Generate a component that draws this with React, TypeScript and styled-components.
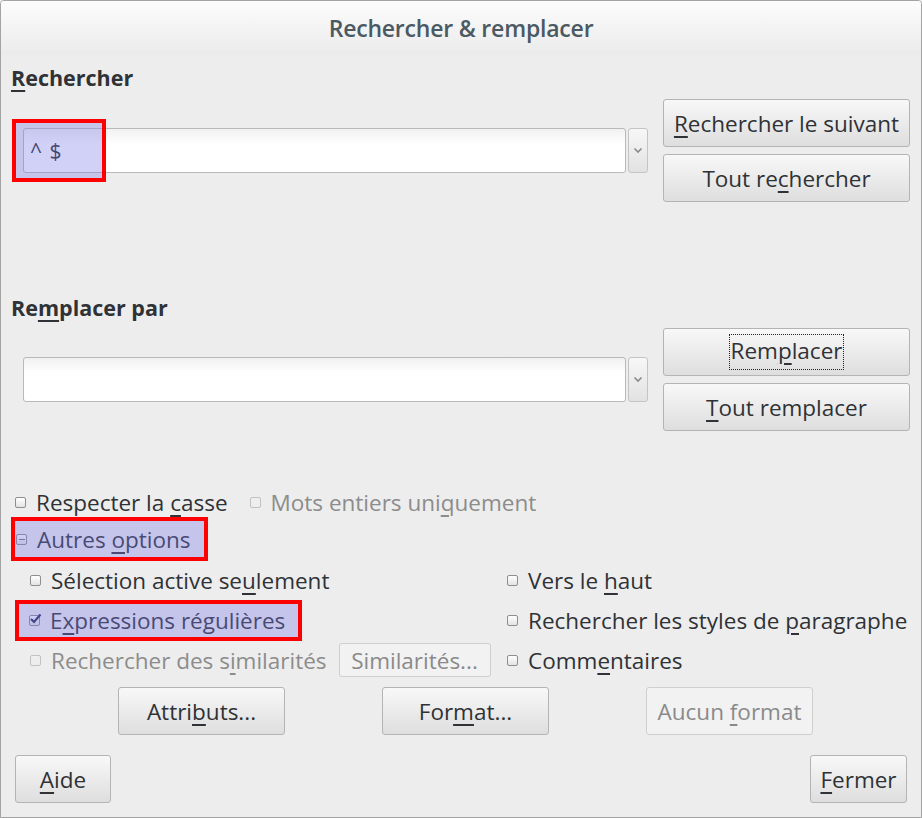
import styled, { createGlobalStyle } from "styled-components";

const Global = createGlobalStyle`
    html, body {
        margin: 0;
        padding: 0;
        background: #ededed;
    }
    body {
        font-family: "Open Sans", "DejaVu Sans", sans-serif;
        color: #333538;
    }
`;

const Window = styled.div`
    width: 922px;
    height: 818px;
    box-sizing: border-box;
    border: 1px solid #a3a3a3;
    border-top-left-radius: 4px;
    border-top-right-radius: 4px;
    background: #ededed;
    display: flex;
    flex-direction: column;
    overflow: hidden;
`;

const TitleBar = styled.div`
    height: 54px;
    flex: none;
    display: flex;
    align-items: center;
    justify-content: center;
    background: linear-gradient(#fcfcfc, #ebebeb);
    font-size: 23px;
    font-weight: 600;
    color: #4b5962;
    letter-spacing: -0.2px;
`;

const Body = styled.div`
    display: flex;
    flex-direction: column;
    padding: 0 10px 0 10px;
    font-size: 22.5px;
`;

const SectionLabel = styled.div<{ top: number }>`
    margin-top: ${(p) => p.top}px;
    height: 24px;
    line-height: 24px;
    font-size: 21.5px;
    font-weight: 700;
    color: #2f3236;
`;

const Mn = styled.span`
    text-decoration: underline;
    text-decoration-thickness: 2px;
    text-underline-offset: 4px;
`;

const FieldRow = styled.div<{ top: number }>`
    margin-top: ${(p) => p.top}px;
    height: 103px;
    display: flex;
    align-items: center;
`;

const ComboWrap = styled.div`
    position: relative;
    margin-left: 12px;
    display: flex;
    gap: 2px;
`;

const Entry = styled.div`
    width: 603px;
    height: 45px;
    box-sizing: border-box;
    border: 1px solid #b9b9b9;
    border-radius: 3px;
    background: linear-gradient(#f1f1f1, #ffffff 35%);
    display: flex;
    align-items: center;
    padding-left: 6px;
    font-size: 21px;
    color: #2a2c30;
    letter-spacing: 1px;
`;

const DropButton = styled.div`
    width: 20px;
    height: 45px;
    box-sizing: border-box;
    border: 1px solid #c4c4c4;
    border-radius: 3px;
    background: linear-gradient(#f7f7f7, #e2e2e2);
    display: flex;
    align-items: center;
    justify-content: center;
`;

const Mark = styled.div<{ w: number; h: number; l: number; t: number }>`
    position: absolute;
    left: ${(p) => p.l}px;
    top: ${(p) => p.t}px;
    width: ${(p) => p.w}px;
    height: ${(p) => p.h}px;
    box-sizing: border-box;
    border: 4px solid #ff0000;
    background: rgba(120, 120, 235, 0.34);
    pointer-events: none;
`;

const ButtonStack = styled.div`
    margin-left: 15px;
    display: flex;
    flex-direction: column;
    gap: 7px;
`;

const Button = styled.div<{ w: number; disabled?: boolean; h?: number }>`
    width: ${(p) => p.w}px;
    height: ${(p) => p.h ?? 48}px;
    box-sizing: border-box;
    border: 1px solid ${(p) => (p.disabled ? "#cfcfcf" : "#b4b4b4")};
    border-radius: 3px;
    background: ${(p) =>
        p.disabled ? "#f2f2f2" : "linear-gradient(#f8f8f8, #dedede)"};
    color: ${(p) => (p.disabled ? "#8a8a8a" : "#2f3236")};
    display: flex;
    align-items: center;
    justify-content: center;
    flex: none;
    white-space: nowrap;
`;

const Focus = styled.span`
    outline: 1px dotted #222;
    padding: 0 1px 2px 1px;
    line-height: 32px;
`;

const OptionRow = styled.div<{ top?: number; h: number }>`
    margin-top: ${(p) => p.top ?? 0}px;
    height: ${(p) => p.h}px;
    display: flex;
    align-items: center;
`;

const Check = styled.span<{ disabled?: boolean }>`
    position: relative;
    width: 11px;
    height: 11px;
    flex: none;
    box-sizing: border-box;
    border: 1px solid ${(p) => (p.disabled ? "#c2c2c2" : "#8e8e8e")};
    border-radius: 2px;
    background: ${(p) =>
        p.disabled ? "#eeeeee" : "linear-gradient(#ffffff, #e3e3e3)"};
`;

const Option = styled.label<{ pad: number; disabled?: boolean }>`
    display: flex;
    align-items: center;
    gap: 10px;
    padding-left: ${(p) => p.pad}px;
    color: ${(p) => (p.disabled ? "#8c8c8c" : "#2f3236")};
    white-space: nowrap;
`;

const Highlight = styled.div<{ w: number; h: number; shift?: number }>`
    position: relative;
    width: ${(p) => p.w}px;
    height: ${(p) => p.h}px;
    margin-left: ${(p) => p.shift ?? 0}px;
    display: flex;
    align-items: center;
    box-sizing: border-box;
`;

const OptionGrid = styled.div`
    display: grid;
    grid-template-columns: 496px 1fr;
    grid-template-rows: 39px 41px 38px;
    align-items: center;
`;

const LeftCell = styled.div`
    display: flex;
    align-items: center;
`;

const FormatRow = styled.div`
    margin-top: 8px;
    display: flex;
    gap: 97px;
    padding-left: 107px;
`;

const Footer = styled.div`
    margin-top: 20px;
    display: flex;
    justify-content: space-between;
    padding: 0 4px 0 4px;
`;

function Chevron() {
    return (
        <svg width="10" height="7" viewBox="0 0 10 7">
            <path d="M1.5 1.5 L5 5 L8.5 1.5" fill="none" stroke="#8a8a8a" strokeWidth="1.6" />
        </svg>
    );
}

function Tick() {
    return (
        <svg
            width="13"
            height="12"
            viewBox="0 0 13 12"
            style={{ position: "absolute", left: -1, top: -3 }}
        >
            <path d="M2 6 L5 9 L11.5 1.5" fill="none" stroke="#2a2a55" strokeWidth="2.2" />
        </svg>
    );
}

function Minus() {
    return (
        <svg width="10" height="2" viewBox="0 0 10 2" style={{ position: "absolute", left: 1, top: 4 }}>
            <rect x="1" y="0" width="6" height="1" fill="#777" />
        </svg>
    );
}

export default function App() {
    return (
        <>
            <Global />
            <Window>
                <TitleBar>Rechercher &amp; remplacer</TitleBar>
                <Body>
                    <SectionLabel top={11}>
                        <Mn>R</Mn>echercher
                    </SectionLabel>
                    <FieldRow top={9}>
                        <ComboWrap>
                            <Entry>^ $</Entry>
                            <DropButton>
                                <Chevron />
                            </DropButton>
                            <Mark l={-11} t={-9} w={94} h={63} />
                        </ComboWrap>
                        <ButtonStack>
                            <Button w={247}>
                                <span>
                                    <Mn>R</Mn>echercher le suivant
                                </span>
                            </Button>
                            <Button w={247}>
                                <span>
                                    Tout re<Mn>c</Mn>hercher
                                </span>
                            </Button>
                        </ButtonStack>
                    </FieldRow>

                    <SectionLabel top={94}>
                        Re<Mn>m</Mn>placer par
                    </SectionLabel>
                    <FieldRow top={8}>
                        <ComboWrap>
                            <Entry />
                            <DropButton>
                                <Chevron />
                            </DropButton>
                        </ComboWrap>
                        <ButtonStack>
                            <Button w={247}>
                                <Focus>
                                    Rem<Mn>p</Mn>lacer
                                </Focus>
                            </Button>
                            <Button w={247}>
                                <span>
                                    <Mn>T</Mn>out remplacer
                                </span>
                            </Button>
                        </ButtonStack>
                    </FieldRow>

                    <OptionRow top={59} h={24}>
                        <Option pad={4}>
                            <Check />
                            <span>
                                Respecter la <Mn>c</Mn>asse
                            </span>
                        </Option>
                        <Option pad={22} disabled>
                            <Check disabled />
                            <span>
                                Mots entiers uni<Mn>q</Mn>uement
                            </span>
                        </Option>
                    </OptionRow>
                    <OptionRow top={3} h={44}>
                        <Highlight w={197} h={44}>
                            <Option pad={5}>
                                <Check>
                                    <Minus />
                                </Check>
                                <span>
                                    Autres <Mn>o</Mn>ptions
                                </span>
                            </Option>
                            <Mark l={0} t={0} w={197} h={44} />
                        </Highlight>
                    </OptionRow>

                    <OptionGrid>
                        <LeftCell>
                            <Option pad={19}>
                                <Check />
                                <span>
                                    Sélection active se<Mn>u</Mn>lement
                                </span>
                            </Option>
                        </LeftCell>
                        <Option pad={0}>
                            <Check />
                            <span>
                                Vers le <Mn>h</Mn>aut
                            </span>
                        </Option>
                        <LeftCell>
                            <Highlight w={287} h={41} shift={4}>
                                <Option pad={14}>
                                    <Check>
                                        <Tick />
                                    </Check>
                                    <span>
                                        E<Mn>x</Mn>pressions régulières
                                    </span>
                                </Option>
                                <Mark l={0} t={0} w={287} h={41} />
                            </Highlight>
                        </LeftCell>
                        <Option pad={0}>
                            <Check />
                            <span>
                                Rechercher les styles de <Mn>p</Mn>aragraphe
                            </span>
                        </Option>
                        <LeftCell>
                            <Option pad={19} disabled>
                                <Check disabled />
                                <span>
                                    Rechercher des s<Mn>i</Mn>milarités
                                </span>
                            </Option>
                            <Button w={152} h={34} disabled style={{ marginLeft: 12 }}>
                                Similarités...
                            </Button>
                        </LeftCell>
                        <Option pad={0}>
                            <Check />
                            <span>
                                Comm<Mn>e</Mn>ntaires
                            </span>
                        </Option>
                    </OptionGrid>

                    <FormatRow>
                        <Button w={167}>
                            <span>
                                Attri<Mn>b</Mn>uts...
                            </span>
                        </Button>
                        <Button w={167}>
                            <span>
                                For<Mn>m</Mn>at...
                            </span>
                        </Button>
                        <Button w={167} disabled>
                            <span>
                                Aucun <Mn>f</Mn>ormat
                            </span>
                        </Button>
                    </FormatRow>

                    <Footer>
                        <Button w={96}>
                            <span>
                                <Mn>A</Mn>ide
                            </span>
                        </Button>
                        <Button w={97}>
                            <span>
                                <Mn>F</Mn>ermer
                            </span>
                        </Button>
                    </Footer>
                </Body>
            </Window>
        </>
    );
}
